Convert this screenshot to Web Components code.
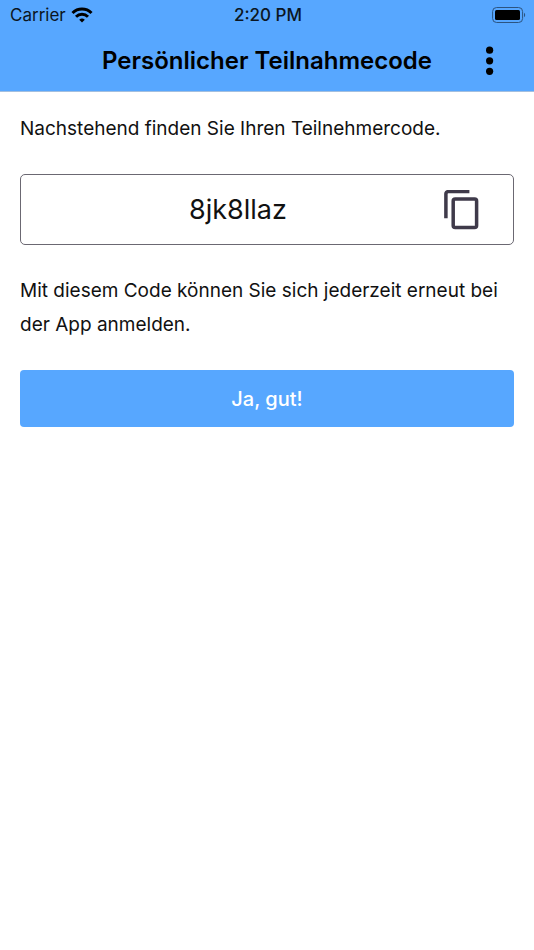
<!DOCTYPE html>
<html lang="de">
<head>
<meta charset="utf-8">
<meta name="viewport" content="width=device-width, initial-scale=1">
<title>Persönlicher Teilnahmecode</title>
<style>
html,body{margin:0;background:#fff}
body{font-family:Inter,"Liberation Sans",sans-serif;color:#111}
</style>
</head>
<body>
<participant-page></participant-page>
<script>
const define = (name, html) => customElements.define(name, class extends HTMLElement {
  constructor() {
    super();
    this.attachShadow({ mode: "open" }).innerHTML = html;
  }
});

define("status-bar", `
<style>
:host{display:grid;grid-template-columns:1fr auto 1fr;align-items:center;height:30px;padding:0 8px 0 10px;font-size:17px;line-height:20px;color:#0b1622}
.left{display:flex;align-items:center;gap:5px}
.time{font-weight:500}
svg{display:block}
.battery{justify-self:end}
</style>
<span class="left"><span>Carrier</span>
<svg width="22" height="16" viewBox="0 0 22 16" fill="none" stroke="#000" stroke-width="3"><path d="M1.5 6a13.5 13.5 0 0 1 19 0M5 9.7a8.6 8.6 0 0 1 12 0"/><path d="M11 15.6 8.2 12.8a4 4 0 0 1 5.6 0z" fill="#000" stroke="none"/></svg></span>
<span class="time"><slot></slot></span>
<svg class="battery" width="34" height="16" viewBox="0 0 34 16"><rect x=".6" y=".5" width="30" height="15" rx="4" fill="none" stroke="#2c5480"/><rect x="3" y="3" width="25" height="10" rx="1.5"/><path d="M32 5.8a2.6 2.6 0 0 1 0 4.4z" fill="#2c5480"/></svg>`);

define("title-bar", `
<style>
:host{display:grid;grid-template-columns:48px 1fr 48px;align-items:center;height:61px;padding:0 20px}
h1{margin:0;font-size:24px;line-height:32px;font-weight:600;text-align:center;color:#000;white-space:nowrap}
button{border:0;background:none;padding:0;width:48px;height:48px;display:grid;place-items:center}
</style>
<span></span><h1><slot></slot></h1>
<button aria-label="Menü"><svg width="8" height="30" viewBox="0 0 8 30"><circle cx="3.6" cy="4.2" r="3.6"/><circle cx="3.6" cy="14.8" r="3.6"/><circle cx="3.6" cy="25.3" r="3.6"/></svg></button>`);

define("code-box", `
<style>
:host{display:flex;align-items:center;box-sizing:border-box;height:71px;border:1px solid #6b6872;border-radius:5px;padding:0 28px 0 18px}
.code{flex:1;text-align:center;font-size:27px;line-height:36px}
button{border:0;background:none;padding:0;width:48px;height:48px;display:grid;place-items:center}
</style>
<span class="code"><slot></slot></span>
<button aria-label="Code kopieren"><svg width="36" height="40" viewBox="0 0 36 40" fill="none" stroke="#3f3a4a" stroke-width="3.5"><path d="M2.9 28.3V3.8a2.2 2.2 0 0 1 2.2-2.2H26.4"/><rect x="10.2" y="9" width="23.4" height="28.6" rx="2"/></svg></button>`);

define("primary-button", `
<style>
:host{display:block}
button{display:block;width:100%;height:57px;border:0;border-radius:4px;background:#57a7ff;color:#fff;font:500 20px/28px Inter,"Liberation Sans",sans-serif}
</style>
<button><slot></slot></button>`);

define("participant-page", `
<style>
header{background:#57a7ff;border-bottom:1px solid #a3bfdf}
main{display:flex;flex-direction:column;padding:20px}
p{margin:0;font-size:19px;line-height:34px}
code-box{margin:28px 0 29px}
primary-button{margin-top:28px}
</style>
<header><status-bar>2:20 PM</status-bar><title-bar>Persönlicher Teilnahmecode</title-bar></header>
<main>
<p>Nachstehend finden Sie Ihren Teilnehmercode.</p>
<code-box>8jk8llaz</code-box>
<p>Mit diesem Code können Sie sich jederzeit erneut bei der App anmelden.</p>
<primary-button>Ja, gut!</primary-button>
</main>`);
</script>
</body>
</html>
